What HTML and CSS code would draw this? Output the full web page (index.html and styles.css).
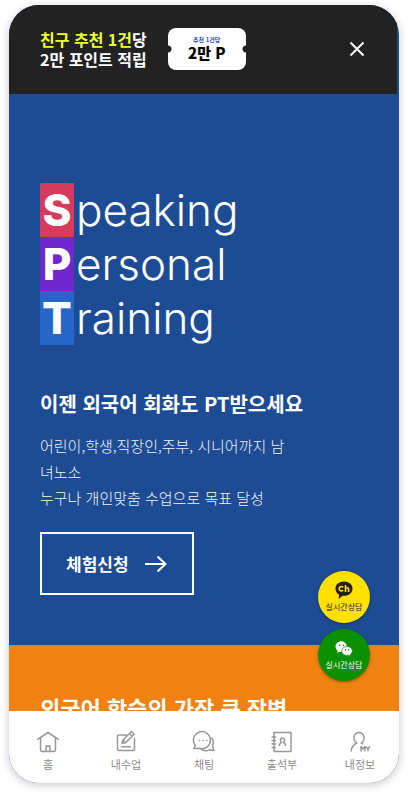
FILE: index.html
```html
<!DOCTYPE html>
<html lang="ko">
<head>
<meta charset="utf-8">
<meta name="viewport" content="width=device-width, initial-scale=1">
<title>SPT</title>
<link rel="stylesheet" href="styles.css">
</head>
<body>
<div class="app">
  <div class="banner">
    <p class="banner-text"><em>친구 추천 1건</em>당<br>2만 포인트 적립</p>
    <div class="coupon"><small>추천 1건당</small><strong>2만 P</strong></div>
    <button class="close" type="button" aria-label="닫기">
      <svg width="16" height="16" viewBox="0 0 16 16"><path d="M1.500 1.500 14.500 14.500M14.500 1.500 1.500 14.500"/></svg>
    </button>
  </div>
  <main class="content">
    <section class="hero">
      <h1 class="title">
        <span class="row"><b class="s">S</b>peaking</span>
        <span class="row"><b class="p">P</b>ersonal</span>
        <span class="row"><b class="t">T</b>raining</span>
      </h1>
      <h2 class="subtitle">이젠 외국어 회화도 PT받으세요</h2>
      <p class="lead">어린이,학생,직장인,주부, 시니어까지 남녀노소<br>누구나 개인맞춤 수업으로 목표 달성</p>
      <a class="trial" href="#trial">체험신청
        <svg width="24" height="20" viewBox="0 0 24 20"><path d="M1 10H21.500M13.500 2.500 21.500 10 13.500 17.500"/></svg>
      </a>
    </section>
    <section class="benefit">
      <h2 class="benefit-title">외국어 학습의 가장 큰 장벽</h2>
    </section>
  </main>
  <nav class="tabs">
    <a href="#home">
      <svg viewBox="0 0 24 24"><path d="M1.200 9.600 12 2.500 22.800 9.600M4.500 8V19.500Q4.500 21.500 6.500 21.500H17.500Q19.500 21.500 19.500 19.500V8M10 21.500V16H14V21.500"/></svg>
      홈</a>
    <a href="#class">
      <svg viewBox="0 0 24 24"><path d="M13 5H4.500Q3.500 5 3.500 6V19.500Q3.500 20.500 4.500 20.500H19.500Q20.500 20.500 20.500 19.500V8M7 16.700H17M8 13.500 9 10 17.500 1.500 20.200 4.200 11.700 12.700ZM9 10 11.700 12.700M15.500 3.500 18.200 6.200"/></svg>
      내수업</a>
    <a href="#chat">
      <svg viewBox="0 0 24 24"><path d="M3.300 15.500A8.500 8.500 0 1 1 7.500 18.300L1.800 18.500ZM19.500 7.500A8.500 8.500 0 0 1 20.500 16L22 20.500 17.500 19.800A8.500 8.500 0 0 1 8.500 18.800"/><path class="dots" d="M7.500 10.500H7.600M11.200 10.500H11.300M14.900 10.500H15"/></svg>
      채팅</a>
    <a href="#attendance">
      <svg viewBox="0 0 24 24"><path d="M4 2.500H21V21.500H4ZM1.500 7H6M1.500 10.500H6M1.500 14H6M1.500 17.500H6M9.500 16V14.500Q10 13 11.500 12.500C9.500 10.500 10.500 8 12.500 8S15.500 10.500 13.500 12.500Q15.500 13 15.500 16"/></svg>
      출석부</a>
    <a href="#my">
      <svg viewBox="0 0 24 24"><path d="M3 21.500C3.500 17 5.500 14.500 8.800 13C3.800 9.500 6 2.500 11 2.500S18.300 9.500 13.200 13L15 14.200M13 21.500V16.500L15 19 17 16.500V21.500M18 16.500 20 19 22 16.500M20 19V21.500"/></svg>
      내정보</a>
  </nav>
  <div class="floating">
    <a class="kakao" href="#kakao">
      <svg width="18" height="19" viewBox="0 0 18 19"><path d="M9 .5C4 .5.500 3.600.500 7.700c0 2.600 1.400 4.700 3.600 6L3.600 18l4.100-3.200H9c5 0 8.500-3 8.500-7.100S14 .5 9 .5Z" fill="#26201a"/><path d="M8 6.200a2.200 2.200 0 1 0 0 3M10.500 4v7M10.500 8.200q.2-1.500 1.600-1.500t1.500 1.500V11" fill="none" stroke="#ffe000" stroke-width="1.600"/></svg>
      실시간상담</a>
    <a class="wechat" href="#wechat">
      <svg width="18" height="16" viewBox="0 0 18 16"><path d="M6.500.5C3 .5.500 2.800.500 5.600c0 1.700.9 3 2.200 4L2.100 12l2.400-1.300 2 .3" fill="#fff"/><circle cx="6.500" cy="5.700" r="5.400" fill="#fff"/><path d="M12 5.500c-3 0-5.300 2-5.300 4.500S9 14.500 12 14.500l1.700-.3 2 1.200-.5-1.900A4.300 4.300 0 0 0 17.500 10C17.500 7.500 15 5.500 12 5.500Z" fill="#fff" stroke="#0a9000" stroke-width=".7"/><g fill="#0a9000"><circle cx="4.700" cy="4.200" r=".8"/><circle cx="8.400" cy="4.200" r=".8"/><circle cx="10.400" cy="8.700" r=".7"/><circle cx="13.600" cy="8.700" r=".7"/></g></svg>
      실시간상담</a>
  </div>
</div>
</body>
</html>
```
FILE: styles.css
```css
* { box-sizing: border-box; }

body {
  margin: 0;
  padding: 5px 9px 13px;
  background: #fff;
  font-family: "Noto Sans CJK KR", sans-serif;
}

h1, h2, p { margin: 0; }
a { color: inherit; text-decoration: none; }

.app {
  position: relative;
  display: flex;
  flex-direction: column;
  height: calc(100vh - 18px);
  overflow: hidden;
  border-radius: 30px;
  background: #1d4c94;
  box-shadow: 0 2px 10px rgba(0, 0, 0, .22);
}

.app svg { fill: none; stroke-linejoin: round; }

.banner {
  display: flex;
  align-items: center;
  margin-right: 2px;
  padding: 0 32px 2px 31px;
  height: 89px;
  background: #222;
  color: #fff;
}

.banner-text {
  font-size: 16px;
  font-weight: 700;
  line-height: 20px;
}
.banner-text em { color: #e9ff35; font-style: normal; }

.coupon {
  display: flex;
  flex-direction: column;
  align-items: center;
  justify-content: center;
  width: 78px;
  height: 42px;
  margin-left: 21px;
  border-radius: 8px;
  background:
    radial-gradient(circle at 0 50%, #222 3px, transparent 4px),
    radial-gradient(circle at 100% 50%, #222 3px, transparent 4px),
    #fff;
  color: #000;
}
.coupon small { color: #2e49b5; font-size: 6px; font-weight: 700; line-height: 8px; }
.coupon strong { font-size: 15px; font-weight: 900; line-height: 18px; }

.close {
  display: flex;
  margin-left: auto;
  padding: 0;
  border: 0;
  background: none;
  cursor: pointer;
}
.close svg { stroke: #fff; stroke-width: 2; }

.content { flex: 1; min-height: 0; overflow: hidden; }

.hero { padding: 89px 31px 50px; color: #fff; }

.title {
  font-family: Inter, sans-serif;
  font-size: 44px;
  font-weight: 300;
  line-height: 54px;
}
.row { display: flex; gap: 2px; }
.row b { width: 34px; font-weight: 800; text-align: center; }
.s { background: #d63a5e; }
.p { background: #7127ce; }
.t { background: #2566c8; }

.subtitle {
  margin-top: 44px;
  font-size: 20px;
  font-weight: 700;
  line-height: 30px;
}

.lead {
  max-width: 258px;
  margin-top: 14px;
  color: #f0f4fa;
  font-size: 15px;
  font-weight: 300;
  line-height: 26px;
}

.trial {
  display: inline-flex;
  align-items: center;
  gap: 15px;
  height: 63px;
  margin-top: 21px;
  padding: 0 24px;
  border: 2px solid #fff;
  font-size: 17px;
  font-weight: 700;
  vertical-align: top;
}
.trial svg { stroke: #fff; stroke-width: 2; }

.benefit { padding: 46px 31px; background: #f08211; color: #fff; }
.benefit-title { font-size: 22px; font-weight: 700; line-height: 32px; }

.tabs {
  display: flex;
  height: 72px;
  background: #fff;
  color: #8c8c8c;
}
.tabs a {
  display: flex;
  flex: 1;
  flex-direction: column;
  align-items: center;
  gap: 1px;
  padding-top: 19px;
  font-size: 11px;
  line-height: 18px;
}
.tabs svg { width: 24px; height: 24px; stroke: #999; stroke-width: 1.500; }
.tabs .dots { stroke-linecap: round; }

.floating {
  position: absolute;
  right: 29px;
  bottom: 102px;
  display: grid;
  gap: 6px;
}
.floating a {
  display: flex;
  flex-direction: column;
  align-items: center;
  width: 52px;
  height: 52px;
  padding-top: 10px;
  border-radius: 50%;
  box-shadow: 0 1px 3px rgba(0, 0, 0, .4);
  font-size: 8px;
  line-height: 14px;
}
.kakao { background: #ffe000; color: #222; }
.wechat { background: #0a9000; color: #fff; }
.floating .wechat { gap: 1px; padding-top: 12px; }
```
